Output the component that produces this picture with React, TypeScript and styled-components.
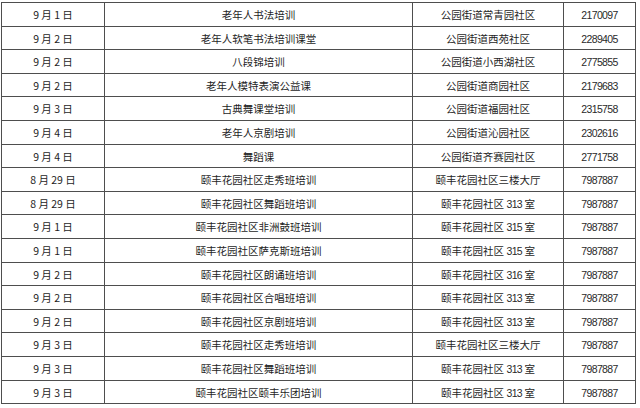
import React from "react";
import styled, { createGlobalStyle } from "styled-components";

type Row = {
  date: string;
  title: string;
  place: string;
  phone: string;
};

const rows: Row[] = [
  { date: "9 月 1 日", title: "老年人书法培训", place: "公园街道常青园社区", phone: "2170097" },
  { date: "9 月 2 日", title: "老年人软笔书法培训课堂", place: "公园街道西苑社区", phone: "2289405" },
  { date: "9 月 2 日", title: "八段锦培训", place: "公园街道小西湖社区", phone: "2775855" },
  { date: "9 月 2 日", title: "老年人模特表演公益课", place: "公园街道商园社区", phone: "2179683" },
  { date: "9 月 3 日", title: "古典舞课堂培训", place: "公园街道福园社区", phone: "2315758" },
  { date: "9 月 4 日", title: "老年人京剧培训", place: "公园街道沁园社区", phone: "2302616" },
  { date: "9 月 4 日", title: "舞蹈课", place: "公园街道齐赛园社区", phone: "2771758" },
  { date: "8 月 29 日", title: "颐丰花园社区走秀班培训", place: "颐丰花园社区三楼大厅", phone: "7987887" },
  { date: "8 月 29 日", title: "颐丰花园社区舞蹈班培训", place: "颐丰花园社区 313 室", phone: "7987887" },
  { date: "9 月 1 日", title: "颐丰花园社区非洲鼓班培训", place: "颐丰花园社区 315 室", phone: "7987887" },
  { date: "9 月 1 日", title: "颐丰花园社区萨克斯班培训", place: "颐丰花园社区 315 室", phone: "7987887" },
  { date: "9 月 2 日", title: "颐丰花园社区朗诵班培训", place: "颐丰花园社区 316 室", phone: "7987887" },
  { date: "9 月 2 日", title: "颐丰花园社区合唱班培训", place: "颐丰花园社区 313 室", phone: "7987887" },
  { date: "9 月 2 日", title: "颐丰花园社区京剧班培训", place: "颐丰花园社区 313 室", phone: "7987887" },
  { date: "9 月 3 日", title: "颐丰花园社区走秀班培训", place: "颐丰花园社区三楼大厅", phone: "7987887" },
  { date: "9 月 3 日", title: "颐丰花园社区舞蹈班培训", place: "颐丰花园社区 313 室", phone: "7987887" },
  { date: "9 月 3 日", title: "颐丰花园社区颐丰乐团培训", place: "颐丰花园社区 313 室", phone: "7987887" },
];

const GlobalStyle = createGlobalStyle`
  html, body {
    margin: 0;
    padding: 0;
    background: #ffffff;
  }
  body {
    font-family: "Noto Sans CJK SC", "Noto Sans", sans-serif;
    color: #1e1e1e;
  }
`;

const Page = styled.div`
  width: 640px;
  height: 408px;
  padding: 2px 0 0 1px;
  box-sizing: border-box;
  overflow: hidden;
`;

const Table = styled.div`
  display: grid;
  grid-template-columns: 102px 307px 150px 71px;
  grid-auto-rows: 22.6px;
  gap: 1px;
  padding: 1px;
  width: max-content;
  background: #4e4e4e;
`;

const Cell = styled.div`
  background: #ffffff;
  display: flex;
  align-items: center;
  justify-content: center;
  padding-top: 2px;
  box-sizing: border-box;
  font-size: 10.5px;
  line-height: 1;
  white-space: pre;
  color: #1e1e1e;
`;

const Num = styled.span`
  font-family: "Liberation Sans", Arial, sans-serif;
  font-size: 10.5px;
  letter-spacing: -0.65px;
  color: #2a2a2a;
`;

// split "颐丰花园社区 313 室" so the digits get the narrow numeral face
const withNums = (text: string) => (
  <span>
    {text.split(/(\d+)/).map((part, i) =>
      /^\d+$/.test(part) ? <Num key={i}>{part}</Num> : <React.Fragment key={i}>{part}</React.Fragment>
    )}
  </span>
);

export default function App() {
  return (
    <>
      <GlobalStyle />
      <Page>
        <Table>
          {rows.map((r, i) => (
            <React.Fragment key={i}>
              <Cell>{r.date}</Cell>
              <Cell>{r.title}</Cell>
              <Cell>{withNums(r.place)}</Cell>
              <Cell>
                <Num>{r.phone}</Num>
              </Cell>
            </React.Fragment>
          ))}
        </Table>
      </Page>
    </>
  );
}
